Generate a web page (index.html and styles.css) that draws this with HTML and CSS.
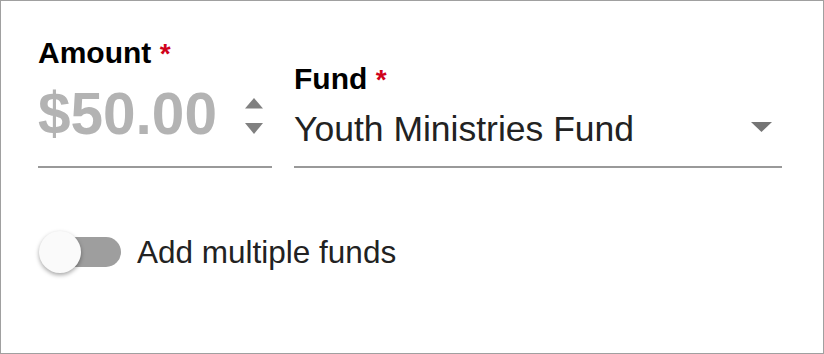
FILE: index.html
```html
<!DOCTYPE html>
<html>
<head>
  <title>Give</title>
  <link rel="stylesheet" href="styles.css">
</head>
<body>
  <div class="gift-form">
    <div class="field-row">
      <div class="field amount-field">
        <div class="field-label">Amount <span class="required">*</span></div>
        <div class="field-input">
          <span class="amount-value">$50.00</span>
          <svg class="spinner" width="18" height="37" viewBox="0 0 18 37">
            <polygon points="9,0 18,10.5 0,10.5" fill="#808080"/>
            <polygon points="0,25 18,25 9,36" fill="#808080"/>
          </svg>
        </div>
      </div>

      <div class="field fund-field">
        <div class="field-label">Fund <span class="required">*</span></div>
        <div class="field-input">
          <span class="fund-value">Youth Ministries Fund</span>
          <svg class="dropdown-arrow" width="21" height="10" viewBox="0 0 21 10">
            <polygon points="0,0 21,0 10.5,10" fill="#757575"/>
          </svg>
        </div>
      </div>
    </div>

    <div class="toggle-row">
      <div class="toggle">
        <div class="toggle-track"></div>
        <div class="toggle-thumb"></div>
      </div>
      <span class="toggle-label">Add multiple funds</span>
    </div>
  </div>
</body>
</html>
```

FILE: styles.css
```css
html, body {
  margin: 0;
  padding: 0;
}

body {
  font-family: 'Liberation Sans', Arial, sans-serif;
  background-color: #ffffff;
  width: 824px;
  height: 354px;
  box-sizing: border-box;
  border: 1px solid #a0a0a0;
}

.gift-form {
  padding: 35px 41px 0 37px;
}

.field-row {
  display: flex;
  align-items: flex-end;
  gap: 22px;
}

.field {
  display: flex;
  flex-direction: column;
}

.amount-field {
  width: 234px;
}

.fund-field {
  flex: 1;
}

.field-label {
  font-size: 30px;
  line-height: 34px;
  font-weight: bold;
  color: #000000;
}

.required {
  color: #d0021b;
  font-weight: bold;
  font-size: 28px;
}

.field-input {
  display: flex;
  align-items: center;
  justify-content: space-between;
  border-bottom: 2px solid #999999;
}

.amount-field .field-input {
  margin-top: 11px;
  padding-bottom: 20px;
}

.amount-value {
  font-size: 58.5px;
  line-height: 64px;
  font-weight: bold;
  color: #b3b3b3;
}

.spinner {
  margin-top: 5px;
  margin-right: 9px;
}

.fund-field .field-input {
  margin-top: 12px;
  padding-bottom: 17px;
}

.fund-value {
  font-size: 35.5px;
  line-height: 40px;
  color: #222222;
}

.dropdown-arrow {
  margin-right: 10px;
  margin-top: -4px;
}

.toggle-row {
  display: flex;
  align-items: center;
  margin-top: 63px;
}

.toggle {
  position: relative;
  width: 82px;
  height: 42px;
  margin-left: 1px;
}

.toggle-track {
  position: absolute;
  left: 16px;
  top: 6px;
  width: 66px;
  height: 30px;
  border-radius: 15px;
  background-color: #9e9e9e;
}

.toggle-thumb {
  position: absolute;
  left: 0;
  top: 0;
  width: 42px;
  height: 42px;
  border-radius: 50%;
  background-color: #fafafa;
  box-shadow: 0 2px 4px rgba(0, 0, 0, 0.35);
}

.toggle-label {
  margin-left: 16px;
  font-size: 31.5px;
  line-height: 36px;
  color: #222222;
}
```
